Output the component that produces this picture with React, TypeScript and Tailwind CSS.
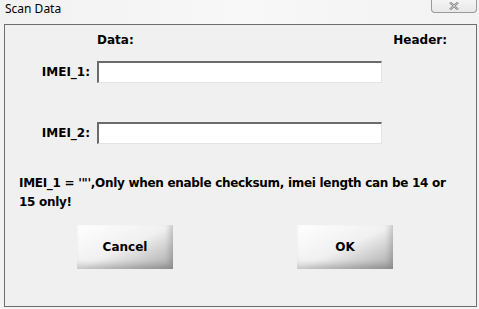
export default function App() {
  const fieldClass =
    "w-[285px] h-[22px] bg-white border-t-2 border-l-2 border-r border-b border-t-[#6b6b6b] border-l-[#6b6b6b] border-r-[#e3e3e3] border-b-[#e3e3e3]";
  const btnClass =
    "w-[96px] h-[44px] flex items-center justify-center text-[12px] font-bold text-black bg-gradient-to-br from-white via-[#f0f0f0] to-[#a8a8a8] shadow-[inset_-3px_-4px_6px_rgba(0,0,0,0.18)]";

  return (
    <div className="w-[479px] h-[309px] bg-[#f3f3f3] font-['DejaVu_Sans',Arial,sans-serif] text-black overflow-hidden">
      {/* Title bar */}
      <div className="h-[24px] flex items-start justify-between bg-gradient-to-r from-[#f1f1f1] via-[#f8f8f8] to-[#f2f2f2]">
        <span className="pl-[5px] pt-[2px] text-[12px] leading-[14px] font-['Noto_Sans',sans-serif]">Scan Data</span>
        <button className="w-[46px] h-[13px] mr-[2px] rounded-b-[4px] border border-t-0 border-[#9a9a9a] bg-gradient-to-b from-[#f4f4f4] to-[#e8e8e8] flex items-center justify-center">
          <svg width="10" height="8" viewBox="0 0 10 8">
            <path d="M1 0.5 L9 7.5 M9 0.5 L1 7.5" stroke="#7a7a7a" strokeWidth="2.2" />
            <path d="M1 0.5 L9 7.5 M9 0.5 L1 7.5" stroke="#eaeaea" strokeWidth="0.8" />
          </svg>
        </button>
      </div>

      {/* Dialog body */}
      <div className="ml-[4px] w-[473px] h-[283px] border border-[#6d6d6d] bg-[#f0f0f0] text-[12px] font-bold">
        <div className="mt-[8px] flex justify-between leading-[14px]">
          <span className="pl-[92px]">Data:</span>
          <span className="pr-[29px]">Header:</span>
        </div>

        <div className="mt-[14px] flex items-center">
          <span className="w-[85px] text-right">IMEI_1:</span>
          <div className={`ml-[7px] ${fieldClass}`} />
        </div>

        <div className="mt-[39px] flex items-center">
          <span className="w-[85px] text-right">IMEI_2:</span>
          <div className={`ml-[7px] ${fieldClass}`} />
        </div>

        <p className="mt-[30px] pl-[14px] pr-[21px] leading-[19px] tracking-[-0.3px]">
          IMEI_1 = '"',Only when enable checksum, imei length can be 14 or 15 only!
        </p>

        <div className="mt-[13px] flex pl-[72px] gap-[124px]">
          <button className={btnClass}>Cancel</button>
          <button className={btnClass}>OK</button>
        </div>
      </div>
    </div>
  );
}
